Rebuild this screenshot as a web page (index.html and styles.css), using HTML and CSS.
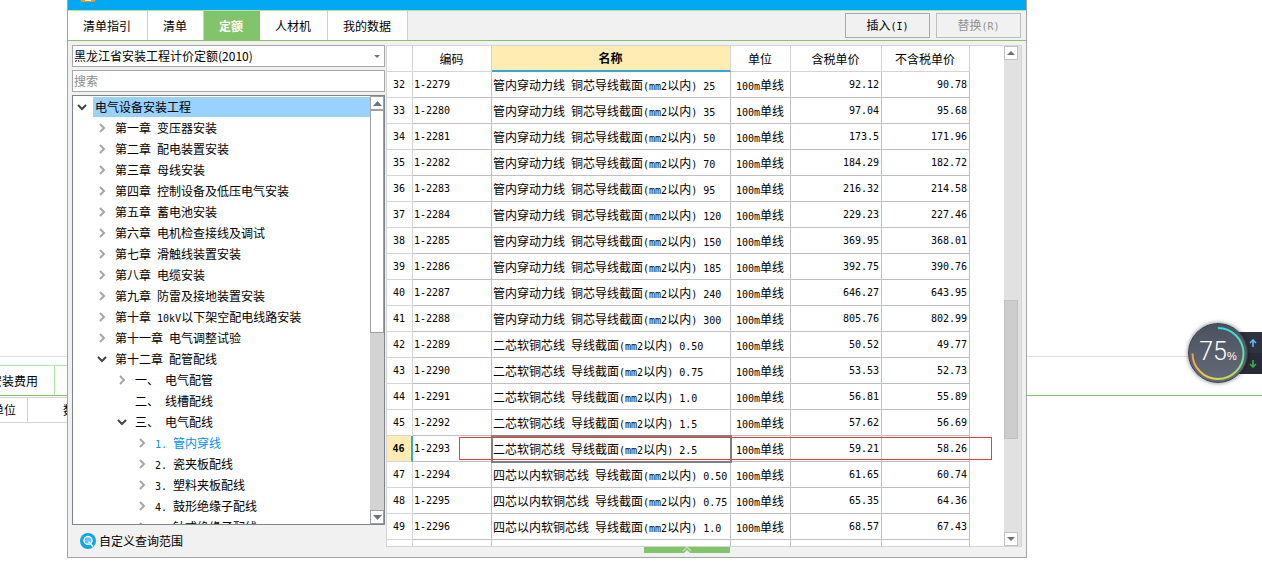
FILE: index.html
```html
<!DOCTYPE html>
<html lang="zh-CN">
<head>
<meta charset="utf-8">
<title>定额</title>
<link rel="stylesheet" href="styles.css">
</head>
<body>
<svg class="defs" aria-hidden="true">
  <symbol id="right" viewBox="0 0 8 10"><path d="M2 1l4 4-4 4" fill="none" stroke="#a6a6a6" stroke-width="2"/></symbol>
  <symbol id="down" viewBox="0 0 10 8"><path d="M1 2l4 4 4-4" fill="none" stroke="#444" stroke-width="2"/></symbol>
</svg>

<main class="backdrop">
  <div class="back-tabs"><span class="back-tab">安装费用</span></div>
  <div class="back-head"><span class="back-unit">单位</span><span class="back-qty">数量</span></div>
</main>

<section class="dialog">
  <header class="titlebar">
    <svg class="logo" viewBox="0 0 16 2"><path d="M0 0h16l-2 2H2z" fill="#f7941d"/><path d="M5 0h6v1H5z" fill="#fff"/></svg>
  </header>
  <nav class="tabs">
    <button class="tab">清单指引</button><button class="tab">清单</button><button class="tab active">定额</button><button class="tab">人材机</button><button class="tab">我的数据</button>
    <div class="actions">
      <button class="action">插入<i>(I)</i></button>
      <button class="action" disabled>替换<i>(R)</i></button>
    </div>
  </nav>
  <div class="content">
    <aside class="side">
      <div class="combo">
        <select class="field" aria-label="定额库"><option>黑龙江省安装工程计价定额(2010)</option></select>
        <svg class="combo-arrow" viewBox="0 0 6 3"><path d="M0 0h6L3 3z" fill="#6d7080"/></svg>
      </div>
      <input class="field search" type="text" placeholder="搜索" aria-label="搜索">
      <div class="tree">
        <ul class="items">
          <li class="l0"><svg class="chev open"><use href="#down"/></svg><span class="label selected">电气设备安装工程</span></li>
          <li class="l1"><svg class="chev"><use href="#right"/></svg><span class="label">第一章<i> </i>变压器安装</span></li>
          <li class="l1"><svg class="chev"><use href="#right"/></svg><span class="label">第二章<i> </i>配电装置安装</span></li>
          <li class="l1"><svg class="chev"><use href="#right"/></svg><span class="label">第三章<i> </i>母线安装</span></li>
          <li class="l1"><svg class="chev"><use href="#right"/></svg><span class="label">第四章<i> </i>控制设备及低压电气安装</span></li>
          <li class="l1"><svg class="chev"><use href="#right"/></svg><span class="label">第五章<i> </i>蓄电池安装</span></li>
          <li class="l1"><svg class="chev"><use href="#right"/></svg><span class="label">第六章<i> </i>电机检查接线及调试</span></li>
          <li class="l1"><svg class="chev"><use href="#right"/></svg><span class="label">第七章<i> </i>滑触线装置安装</span></li>
          <li class="l1"><svg class="chev"><use href="#right"/></svg><span class="label">第八章<i> </i>电缆安装</span></li>
          <li class="l1"><svg class="chev"><use href="#right"/></svg><span class="label">第九章<i> </i>防雷及接地装置安装</span></li>
          <li class="l1"><svg class="chev"><use href="#right"/></svg><span class="label">第十章<i> 10kV</i>以下架空配电线路安装</span></li>
          <li class="l1"><svg class="chev"><use href="#right"/></svg><span class="label">第十一章<i> </i>电气调整试验</span></li>
          <li class="l1"><svg class="chev open"><use href="#down"/></svg><span class="label">第十二章<i> </i>配管配线</span></li>
          <li class="l2"><svg class="chev"><use href="#right"/></svg><span class="label">一、<i> </i>电气配管</span></li>
          <li class="l2"><svg class="chev"></svg><span class="label">二、<i> </i>线槽配线</span></li>
          <li class="l2"><svg class="chev open"><use href="#down"/></svg><span class="label">三、<i> </i>电气配线</span></li>
          <li class="l3"><svg class="chev"><use href="#right"/></svg><span class="label current"><i>1. </i>管内穿线</span></li>
          <li class="l3"><svg class="chev"><use href="#right"/></svg><span class="label"><i>2. </i>瓷夹板配线</span></li>
          <li class="l3"><svg class="chev"><use href="#right"/></svg><span class="label"><i>3. </i>塑料夹板配线</span></li>
          <li class="l3"><svg class="chev"><use href="#right"/></svg><span class="label"><i>4. </i>鼓形绝缘子配线</span></li>
          <li class="l3"><svg class="chev"><use href="#right"/></svg><span class="label"><i>5. </i>针式绝缘子配线</span></li>
        </ul>
        <div class="tree-bar">
          <button class="tree-btn" aria-label="向上"><svg viewBox="0 0 9 5"><path d="M4.500 0L9 5H0z" fill="#6d7080"/></svg></button>
          <div class="tree-thumb"></div>
          <div class="tree-rest"></div>
          <button class="tree-btn" aria-label="向下"><svg viewBox="0 0 9 5"><path d="M0 0h9L4.500 5z" fill="#6d7080"/></svg></button>
        </div>
      </div>
      <button class="range">
        <svg viewBox="0 0 16 16"><circle cx="8" cy="8" r="8" fill="#0aa5ee"/><circle cx="8" cy="7.500" r="4" fill="#5cc4f4" stroke="#fff" stroke-width="1.500"/><path d="M8.500 8.500l4.500 5" stroke="#fff" stroke-width="1.600"/></svg>
        自定义查询范围
      </button>
    </aside>
    <div class="main">
      <div class="grid">
        <div class="rows">
          <table>
            <colgroup><col class="c-no"><col class="c-code"><col class="c-name"><col class="c-unit"><col class="c-tax"><col class="c-net"></colgroup>
            <thead><tr><th></th><th>编码</th><th class="sorted">名称</th><th>单位</th><th>含税单价</th><th>不含税单价</th></tr></thead>
            <tbody>
              <tr><th>32</th><td class="code">1-2279</td><td>管内穿动力线<i> </i>铜芯导线截面<i>(mm2</i>以内<i>) 25</i></td><td class="unit"><i>100m</i>单线</td><td class="num">92.12</td><td class="num">90.78</td></tr>
              <tr><th>33</th><td class="code">1-2280</td><td>管内穿动力线<i> </i>铜芯导线截面<i>(mm2</i>以内<i>) 35</i></td><td class="unit"><i>100m</i>单线</td><td class="num">97.04</td><td class="num">95.68</td></tr>
              <tr><th>34</th><td class="code">1-2281</td><td>管内穿动力线<i> </i>铜芯导线截面<i>(mm2</i>以内<i>) 50</i></td><td class="unit"><i>100m</i>单线</td><td class="num">173.5</td><td class="num">171.96</td></tr>
              <tr><th>35</th><td class="code">1-2282</td><td>管内穿动力线<i> </i>铜芯导线截面<i>(mm2</i>以内<i>) 70</i></td><td class="unit"><i>100m</i>单线</td><td class="num">184.29</td><td class="num">182.72</td></tr>
              <tr><th>36</th><td class="code">1-2283</td><td>管内穿动力线<i> </i>铜芯导线截面<i>(mm2</i>以内<i>) 95</i></td><td class="unit"><i>100m</i>单线</td><td class="num">216.32</td><td class="num">214.58</td></tr>
              <tr><th>37</th><td class="code">1-2284</td><td>管内穿动力线<i> </i>铜芯导线截面<i>(mm2</i>以内<i>) 120</i></td><td class="unit"><i>100m</i>单线</td><td class="num">229.23</td><td class="num">227.46</td></tr>
              <tr><th>38</th><td class="code">1-2285</td><td>管内穿动力线<i> </i>铜芯导线截面<i>(mm2</i>以内<i>) 150</i></td><td class="unit"><i>100m</i>单线</td><td class="num">369.95</td><td class="num">368.01</td></tr>
              <tr><th>39</th><td class="code">1-2286</td><td>管内穿动力线<i> </i>铜芯导线截面<i>(mm2</i>以内<i>) 185</i></td><td class="unit"><i>100m</i>单线</td><td class="num">392.75</td><td class="num">390.76</td></tr>
              <tr><th>40</th><td class="code">1-2287</td><td>管内穿动力线<i> </i>铜芯导线截面<i>(mm2</i>以内<i>) 240</i></td><td class="unit"><i>100m</i>单线</td><td class="num">646.27</td><td class="num">643.95</td></tr>
              <tr><th>41</th><td class="code">1-2288</td><td>管内穿动力线<i> </i>铜芯导线截面<i>(mm2</i>以内<i>) 300</i></td><td class="unit"><i>100m</i>单线</td><td class="num">805.76</td><td class="num">802.99</td></tr>
              <tr><th>42</th><td class="code">1-2289</td><td>二芯软铜芯线<i> </i>导线截面<i>(mm2</i>以内<i>) 0.50</i></td><td class="unit"><i>100m</i>单线</td><td class="num">50.52</td><td class="num">49.77</td></tr>
              <tr><th>43</th><td class="code">1-2290</td><td>二芯软铜芯线<i> </i>导线截面<i>(mm2</i>以内<i>) 0.75</i></td><td class="unit"><i>100m</i>单线</td><td class="num">53.53</td><td class="num">52.73</td></tr>
              <tr><th>44</th><td class="code">1-2291</td><td>二芯软铜芯线<i> </i>导线截面<i>(mm2</i>以内<i>) 1.0</i></td><td class="unit"><i>100m</i>单线</td><td class="num">56.81</td><td class="num">55.89</td></tr>
              <tr><th>45</th><td class="code">1-2292</td><td>二芯软铜芯线<i> </i>导线截面<i>(mm2</i>以内<i>) 1.5</i></td><td class="unit"><i>100m</i>单线</td><td class="num">57.62</td><td class="num">56.69</td></tr>
              <tr class="picked"><th>46</th><td class="code">1-2293</td><td class="cell">二芯软铜芯线<i> </i>导线截面<i>(mm2</i>以内<i>) 2.5</i></td><td class="unit"><i>100m</i>单线</td><td class="num">59.21</td><td class="num">58.26</td></tr>
              <tr><th>47</th><td class="code">1-2294</td><td>四芯以内软铜芯线<i> </i>导线截面<i>(mm2</i>以内<i>) 0.50</i></td><td class="unit"><i>100m</i>单线</td><td class="num">61.65</td><td class="num">60.74</td></tr>
              <tr><th>48</th><td class="code">1-2295</td><td>四芯以内软铜芯线<i> </i>导线截面<i>(mm2</i>以内<i>) 0.75</i></td><td class="unit"><i>100m</i>单线</td><td class="num">65.35</td><td class="num">64.36</td></tr>
              <tr><th>49</th><td class="code">1-2296</td><td>四芯以内软铜芯线<i> </i>导线截面<i>(mm2</i>以内<i>) 1.0</i></td><td class="unit"><i>100m</i>单线</td><td class="num">68.57</td><td class="num">67.43</td></tr>
              <tr><th></th><td></td><td></td><td></td><td></td><td></td></tr>
            </tbody>
          </table>
          <div class="marker"></div>
        </div>
        <div class="grid-bar">
          <button class="grid-btn" aria-label="向上"><svg viewBox="0 0 8 4"><path d="M4 0l4 4H0z" fill="#6d7080"/></svg></button>
          <div class="grid-gap"></div>
          <div class="grid-thumb"></div>
          <div class="grid-rest"></div>
          <button class="grid-btn" aria-label="向下"><svg viewBox="0 0 8 4"><path d="M0 0h8L4 4z" fill="#6d7080"/></svg></button>
        </div>
      </div>
      <button class="expander" aria-label="展开"><svg viewBox="0 0 10 6"><path d="M1 4L5 0l4 4" fill="none" stroke="#c5e6b8" stroke-width="1.200"/><path d="M2 6l3-3 3 3z" fill="#f4fbf0"/></svg></button>
    </div>
  </div>
</section>

<div class="gauge">
  <div class="gauge-side">
    <svg viewBox="0 0 8 8"><path d="M4 8V2M1 4l3-3 3 3" fill="none" stroke="#5ab9f5" stroke-width="1.600"/></svg>
    <svg viewBox="0 0 8 8"><path d="M4 0v6M1 4l3 3 3-3" fill="none" stroke="#35b04a" stroke-width="1.600"/></svg>
  </div>
  <div class="dial">
    <svg class="ring" viewBox="0 0 60 60">
      <defs>
        <linearGradient id="ga" x1="0" y1="0" x2="0" y2="1"><stop offset="0" stop-color="#2ee0e0"/><stop offset=".6" stop-color="#6fdc9a"/><stop offset="1" stop-color="#c9dc50"/></linearGradient>
        <linearGradient id="gb" x1="1" y1="0" x2="0" y2="0"><stop offset="0" stop-color="#d8dc48"/><stop offset=".6" stop-color="#e8c840"/><stop offset="1" stop-color="#f0a048"/></linearGradient>
      </defs>
      <path d="M30 5A25.500 25.500 0 0 1 30 56" fill="none" stroke="url(#ga)" stroke-width="2"/>
      <path d="M30 56A25.500 25.500 0 0 1 4.500 30.500" fill="none" stroke="url(#gb)" stroke-width="2"/>
    </svg>
    <span class="value">75</span><span class="pct">%</span>
  </div>
</div>
</body>
</html>
```

FILE: styles.css
```css
* { box-sizing: border-box; }

body {
  margin: 0;
  min-height: 100vh;
  overflow: hidden;
  background: #fff;
  color: #000;
  font: 12px/20px "Noto Sans CJK SC", sans-serif;
}

button, input, select {
  margin: 0;
  padding: 0;
  border: 0;
  border-radius: 0;
  background: none;
  color: inherit;
  font: inherit;
}

svg { display: block; flex: none; }
.defs { position: absolute; width: 0; height: 0; }

/* half-width characters are half the width of a Chinese one */
i {
  font: 10px/12px "DejaVu Sans Mono", monospace;
  white-space: pre;
}

/* page behind the dialog */
.backdrop { padding-top: 356px; }
.back-tabs {
  display: flex;
  height: 40px;
  border-top: 1px solid #e1e1e1;
  border-bottom: 1px solid #82c46c;
}
.back-tab {
  width: 55px;
  margin-top: 8px;
  padding-top: 6px;
  border-right: 1px solid #b5e3a0;
  text-indent: -10px;
  white-space: nowrap;
}
.back-tabs { background: linear-gradient(#b5e3a0, #b5e3a0) 0 8px / 80px 1px no-repeat; }
.back-head {
  display: flex;
  width: 90px;
  margin-top: 1px;
  border: 1px solid #d4d4d4;
  border-left: 0;
  line-height: 24px;
}
.back-unit { width: 28px; border-right: 1px solid #d4d4d4; text-indent: -8px; }
.back-qty { padding-left: 35px; white-space: nowrap; overflow: hidden; }

/* dialog */
.dialog {
  position: absolute;
  top: 0;
  bottom: 7px;
  left: 67px;
  right: 235px;
  display: flex;
  flex-direction: column;
  border: 1px solid #a5a5a5;
  border-top: 0;
  background: #f1f1f1;
}
.titlebar { height: 10px; background: #00a9f2; }
.logo { width: 16px; height: 2px; margin-left: 12px; }

.tabs {
  display: flex;
  height: 31px;
  border-top: 1px solid #b5e3a0;
  border-bottom: 1px solid #82c46c;
}
.tab {
  padding: 0 16px 0 15px;
  border-right: 1px solid #b5e3a0;
  background: #fff;
}
.tabs .active { border-color: #82c46c; background: #82c46c; color: #fff; font-weight: 700; }
.actions {
  display: flex;
  gap: 6px;
  margin: 2px 5px 2px auto;
}
.action { width: 85px; padding-bottom: 2px; border: 1px solid #a8a8a8; }
.action:disabled { border-color: #bdbdbd; color: #929292; }

.content {
  display: flex;
  flex: 1;
  gap: 1px;
  min-height: 0;
  padding: 4px;
}

/* left pane */
.side {
  display: flex;
  flex-direction: column;
  width: 313px;
  min-height: 0;
}
.combo { position: relative; }
.field {
  display: block;
  width: 100%;
  height: 22px;
  padding: 0 1px 2px;
  border: 1px solid #a8a8a8;
  background: #fff;
  appearance: none;
}
.combo-arrow { position: absolute; top: 10px; right: 5px; width: 6px; height: 3px; }
.search { margin: 3px 0; }
.search::placeholder { color: #8a8a8a; opacity: 1; }

.tree {
  display: flex;
  flex: 1;
  min-height: 0;
  border: 1px solid #80848e;
  background: #fff;
}
.items {
  flex: 1;
  margin: 0;
  padding: 0;
  overflow: hidden;
  list-style: none;
}
.items li { display: flex; align-items: center; height: 21px; }
.chev { width: 8px; height: 10px; margin: 0 9px 0 5px; }
.open { width: 10px; height: 8px; margin: 0 8px 0 4px; }
.label { white-space: nowrap; }
.l1 { padding-left: 20px; }
.l2 { padding-left: 40px; }
.l3 { padding-left: 60px; }
.selected { flex: 1; margin-left: -2px; padding-left: 2px; background: #99d1ff; }

.current { color: #0090ff; }

.tree-bar {
  display: flex;
  flex-direction: column;
  width: 14px;
  background: #d3d3d3;
}
.tree-btn {
  display: grid;
  place-items: center;
  height: 14px;
  border: 1px solid #a0a0a0;
  background: #fff;
}
.tree-btn svg { width: 9px; height: 5px; }
.tree-thumb { flex: 222; border: 1px solid #a0a0a0; background: #fff; }
.tree-rest { flex: 178; }

.range {
  display: flex;
  align-items: center;
  gap: 3px;
  height: 28px;
  padding: 3px 8px 0;
}
.range svg { width: 16px; height: 16px; }

/* right pane */
.main {
  display: flex;
  flex: 1;
  flex-direction: column;
  min-width: 0;
  min-height: 0;
}
.grid {
  display: flex;
  flex: 1;
  min-height: 0;
  border: 1px solid #d4d4d4;
  background: #fff;
}
.rows { position: relative; flex: 1; overflow: hidden; }
table { width: 583px; border-collapse: separate; border-spacing: 0; table-layout: fixed; }
.c-no { width: 26px; }
.c-code { width: 79px; }
.c-name { width: 239px; }
.c-unit { width: 60px; }
.c-tax { width: 91px; }
.c-net { width: 88px; }
th, td {
  height: 26px;
  padding: 0 2px 0 1px;
  border-right: 1px solid #c0c0c0;
  border-bottom: 1px solid #c0c0c0;
  font-weight: 400;
  line-height: 20px;
  text-align: left;
  white-space: nowrap;
}
thead th { border-color: #d4d4d4; text-align: center; }
thead .sorted { border-bottom: 2px solid #36a6d4; background: #ffecb3; font-weight: 700; }
tbody th, .code, .num { font: 10px/20px "DejaVu Sans Mono", monospace; }
tbody th { border-color: #d4d4d4; text-align: center; }
.num { text-align: right; }
.unit { text-align: center; }
.picked th { border-right: 2px solid #36a6d4; background: #ffecb3; font-weight: 700; }
.picked .cell { outline: 2px solid #808080; outline-offset: -1px; }
.marker {
  position: absolute;
  top: 391px;
  left: 72px;
  width: 533px;
  height: 23px;
  border: 1px solid #f03c37;
}

.grid-bar {
  display: flex;
  flex-direction: column;
  width: 17px;
  padding-right: 3px;
  background: #e1e1e1;
}
.grid-btn {
  display: grid;
  place-items: center;
  height: 14px;
  border: 1px solid #c0c0c0;
  background: #fff;
}
.grid-btn svg { width: 8px; height: 4px; }
.grid-gap { flex: 241; }
.grid-thumb { flex: 138; border: 1px solid #c0c0c0; background: #cdcdcd; }
.grid-rest { flex: 93; }

.expander {
  display: grid;
  place-items: center;
  width: 86px;
  height: 6px;
  margin-left: 258px;
  background: #82c46c;
}
.expander svg { width: 10px; height: 6px; }

/* floating usage gauge */
.gauge {
  position: absolute;
  top: 322px;
  right: 0;
  display: flex;
  align-items: center;
  width: 75px;
  height: 62px;
}
.gauge-side {
  display: flex;
  flex-direction: column;
  align-items: flex-end;
  justify-content: space-around;
  width: 100%;
  height: 42px;
  padding-right: 5px;
  background: linear-gradient(#2e333f 50%, #282c37 50%);
  clip-path: inset(0 0 0 40px);
}
.gauge-side svg { width: 8px; height: 8px; }
.dial {
  position: absolute;
  top: 1px;
  left: 1px;
  display: flex;
  align-items: baseline;
  justify-content: center;
  width: 60px;
  height: 60px;
  border: 1px solid #3a3e4a;
  border-radius: 50%;
  background: linear-gradient(#4c5160, #656a79);
  box-shadow: 0 0 4px #00000080;
  color: #fff;
}
.ring { position: absolute; top: -1px; left: -1px; width: 60px; height: 60px; }
.value { font: 300 25px/56px Roboto, sans-serif; }
.pct { font: 11px/12px "Liberation Sans", sans-serif; }
```
